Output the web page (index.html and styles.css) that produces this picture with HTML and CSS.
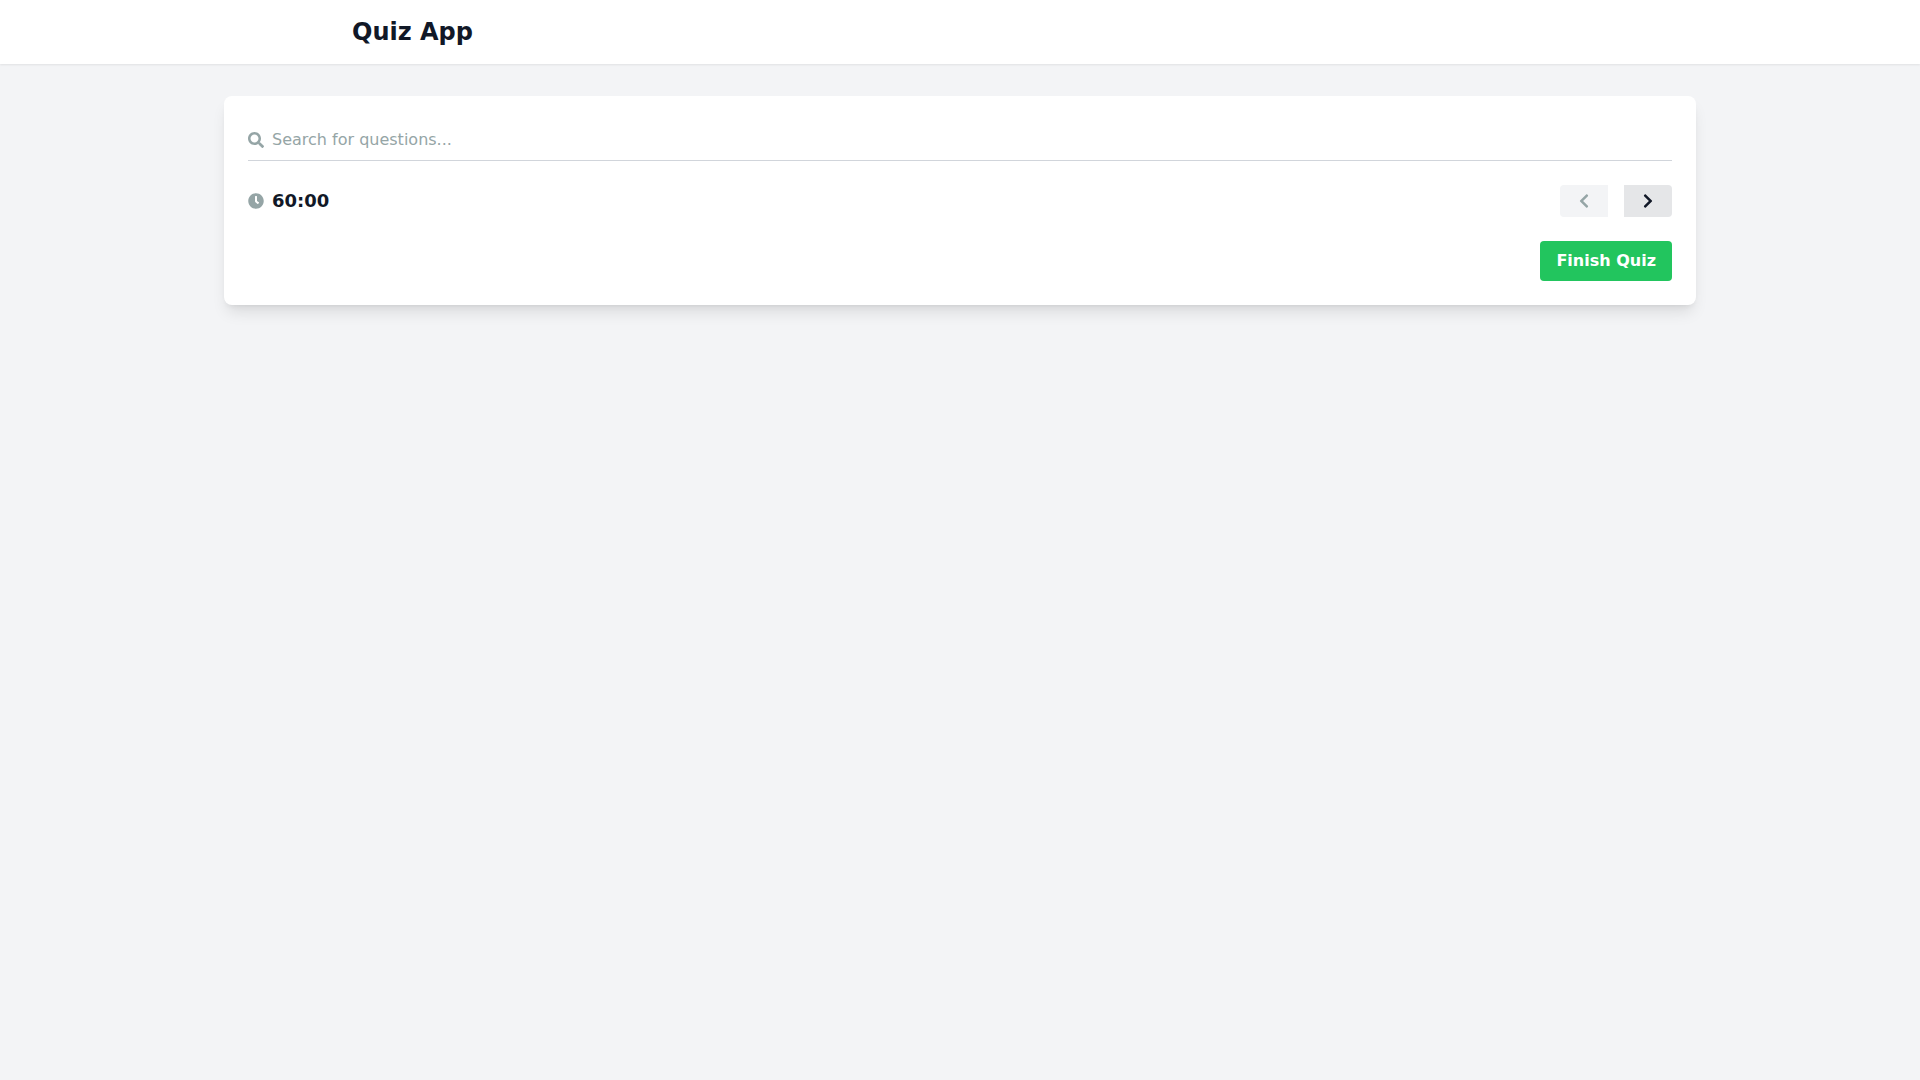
FILE: index.html
```html
<!DOCTYPE html>
<html lang="en">
<head>
    <meta charset="UTF-8">
    <meta name="viewport" content="width=device-width, initial-scale=1.0">
    <title>Quiz App</title>
    <link rel="stylesheet" href="styles.css">
</head>
<body>
    <header class="topbar">
        <div class="topbar-inner">
            <h1 class="brand">Quiz App</h1>
        </div>
    </header>

    <main class="card">
        <!-- Search -->
        <div class="search">
            <svg class="icon" viewBox="0 0 512 512"><path d="M505 442.700L405.300 343c-4.500-4.500-10.600-7-17-7H372c27.600-35.300 44-79.700 44-128C416 93.100 322.900 0 208 0S0 93.100 0 208s93.100 208 208 208c48.300 0 92.700-16.400 128-44v16.300c0 6.400 2.500 12.500 7 17l99.700 99.700c9.400 9.400 24.600 9.400 33.900 0l28.300-28.300c9.400-9.400 9.400-24.600.1-34zM208 336c-70.700 0-128-57.200-128-128 0-70.700 57.200-128 128-128 70.700 0 128 57.200 128 128 0 70.700-57.200 128-128 128z"/></svg>
            <input class="search-input" type="text" placeholder="Search for questions...">
        </div>

        <!-- Timer and navigation -->
        <div class="status">
            <div class="timer">
                <svg class="icon" viewBox="0 0 512 512"><path d="M256 8C119 8 8 119 8 256s111 248 248 248 248-111 248-248S393 8 256 8zm92.490 313l-20 25a16 16 0 0 1-22.490 2.500l-67-49.720a40 40 0 0 1-15-31.230V112a16 16 0 0 1 16-16h32a16 16 0 0 1 16 16v144l58 42.500a16 16 0 0 1 2.490 22.500z"/></svg>
                <span class="time">60:00</span>
            </div>
            <div class="nav">
                <button class="nav-btn prev" aria-label="Previous">
                    <svg viewBox="0 0 320 512"><path d="M34.520 239.030L228.870 44.690c9.370-9.370 24.570-9.370 33.940 0l22.670 22.670c9.360 9.360 9.370 24.520.04 33.900L131.490 256l154.020 154.750c9.340 9.380 9.320 24.540-.04 33.900l-22.670 22.670c-9.370 9.370-24.570 9.370-33.940 0L34.520 272.970c-9.370-9.370-9.370-24.570 0-33.940z"/></svg>
                </button>
                <button class="nav-btn next" aria-label="Next">
                    <svg viewBox="0 0 320 512"><path d="M285.476 272.971L91.132 467.314c-9.373 9.373-24.569 9.373-33.941 0l-22.667-22.667c-9.357-9.357-9.375-24.522-.04-33.901L188.505 256 34.484 101.255c-9.335-9.379-9.317-24.544.04-33.901l22.667-22.667c9.373-9.373 24.569-9.373 33.941 0L285.475 239.030c9.373 9.372 9.373 24.568.001 33.941z"/></svg>
                </button>
            </div>
        </div>

        <div class="actions">
            <button class="finish-btn">Finish Quiz</button>
        </div>
    </main>
</body>
</html>
```

FILE: styles.css
```css
body {
    margin: 0;
    min-height: 100vh;
    background-color: #f3f4f6;
    font-family: "DejaVu Sans", sans-serif;
    color: #111827;
}

/* Header */
.topbar {
    background-color: white;
    height: 64px;
    box-shadow: 0 1px 2px rgba(0, 0, 0, 0.08);
}

.topbar-inner {
    max-width: 1216px;
    height: 100%;
    margin: 0 auto;
    display: flex;
    align-items: center;
}

.brand {
    margin: 0;
    font-size: 24px;
    font-weight: 700;
    color: #111827;
}

/* Card */
.card {
    width: 1472px;
    box-sizing: border-box;
    margin: 32px auto 0;
    padding: 24px;
    background-color: white;
    border-radius: 8px;
    box-shadow: 0 10px 15px -3px rgba(0, 0, 0, 0.1), 0 4px 6px -4px rgba(0, 0, 0, 0.1);
}

.icon {
    width: 16px;
    height: 16px;
    fill: #95a5a6;
    flex-shrink: 0;
}

/* Search */
.search {
    display: flex;
    align-items: center;
    gap: 8px;
    height: 40px;
    border-bottom: 1px solid #d1d5db;
}

.search-input {
    flex: 1;
    border: none;
    outline: none;
    padding: 0 0 2px;
    font-family: inherit;
    font-size: 16px;
    background: transparent;
}

.search-input::placeholder {
    color: #95a5a6;
    opacity: 1;
}

/* Timer and navigation */
.status {
    display: flex;
    justify-content: space-between;
    align-items: center;
    margin-top: 24px;
}

.timer {
    display: flex;
    align-items: center;
    gap: 8px;
    font-size: 18px;
    font-weight: 700;
}

.time {
    padding-bottom: 2px;
}

.nav {
    display: flex;
    gap: 16px;
}

.nav-btn {
    width: 48px;
    height: 32px;
    padding: 0;
    border: none;
    display: flex;
    align-items: center;
    justify-content: center;
}

.nav-btn svg {
    height: 16px;
    width: 10px;
}

.prev {
    background-color: #f3f4f6;
    border-radius: 4px 0 0 4px;
}

.prev svg {
    fill: #95a5a6;
}

.next {
    background-color: #e5e6e8;
    border-radius: 0 4px 4px 0;
}

.next svg {
    fill: #111827;
}

/* Finish */
.actions {
    display: flex;
    justify-content: flex-end;
    margin-top: 24px;
}

.finish-btn {
    height: 40px;
    padding: 0 16px 2px;
    border: none;
    border-radius: 4px;
    background-color: #22c55e;
    color: white;
    font-family: inherit;
    font-size: 16px;
    font-weight: 700;
}
```
